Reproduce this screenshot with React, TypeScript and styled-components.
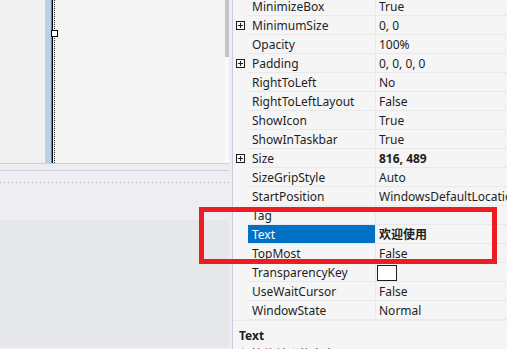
import React from "react";
import styled, {createGlobalStyle} from "styled-components";

const GlobalStyle = createGlobalStyle`
  html, body {
    margin: 0;
    padding: 0;
    background: #eeeef2;
  }
`

interface Prop {
    name: string;
    value?: string;
    expandable?: boolean;
    bold?: boolean;
    selected?: boolean;
    colorBox?: boolean;
}

const props: Prop[] = [
    {name: "MinimizeBox", value: "True"},
    {name: "MinimumSize", value: "0, 0", expandable: true},
    {name: "Opacity", value: "100%"},
    {name: "Padding", value: "0, 0, 0, 0", expandable: true},
    {name: "RightToLeft", value: "No"},
    {name: "RightToLeftLayout", value: "False"},
    {name: "ShowIcon", value: "True"},
    {name: "ShowInTaskbar", value: "True"},
    {name: "Size", value: "816, 489", expandable: true, bold: true},
    {name: "SizeGripStyle", value: "Auto"},
    {name: "StartPosition", value: "WindowsDefaultLocation"},
    {name: "Tag", value: ""},
    {name: "Text", value: "欢迎使用", bold: true, selected: true},
    {name: "TopMost", value: "False"},
    {name: "TransparencyKey", colorBox: true},
    {name: "UseWaitCursor", value: "False"},
    {name: "WindowState", value: "Normal"},
]

const PlusBox = () => (
    <svg width="9" height="9" viewBox="0 0 9 9">
        <rect x="0.5" y="0.5" width="8" height="8" fill="none" stroke="#1e1e1e"/>
        <path d="M2 4.5h5M4.5 2v5" stroke="#1e1e1e"/>
    </svg>
)

const App = () => {
    return (
        <Screen>
            <GlobalStyle/>
            <LeftPane>
                <Designer>
                    <Canvas>
                        <FormBody/>
                        <FormBorder/>
                        <SelectLine/>
                        <DotLine/>
                        <Handle/>
                    </Canvas>
                    <ScrollTrack>
                        <ScrollThumb/>
                    </ScrollTrack>
                </Designer>
                <TrayStrip>
                    <TrayLine/>
                    <Dots/>
                </TrayStrip>
                <ComponentTray/>
            </LeftPane>
            <RightPane>
                <Grid>
                    {props.map(p => (
                        <Row key={p.name}>
                            <Margin>{p.expandable && <PlusBox/>}</Margin>
                            <NameCell $selected={p.selected}>{p.name}</NameCell>
                            <ValueCell $bold={p.bold}>
                                {p.colorBox ? <ColorSwatch/> : p.value}
                            </ValueCell>
                        </Row>
                    ))}
                </Grid>
                <Description>
                    <DescTitle>Text</DescTitle>
                    <DescText>与控件关联的文本。</DescText>
                </Description>
            </RightPane>
            <Annotation/>
        </Screen>
    );
}

const Screen = styled.div`
  position: relative;
  width: 507px;
  height: 349px;
  overflow: hidden;
  display: flex;
  background: #eeeef2;
  font-family: "Noto Sans", "Noto Sans CJK SC", sans-serif;
  font-size: 12px;
  color: #1e1e1e;
`

const LeftPane = styled.div`
  width: 232px;
  flex-shrink: 0;
  display: flex;
  flex-direction: column;
  border-right: 1px solid #ccccdb;
`

const Designer = styled.div`
  width: 229px;
  height: 163px;
  display: flex;
  border-bottom: 1px solid #d0d0d8;
`

const Canvas = styled.div`
  position: relative;
  flex: 1;
  display: flex;
  background: #f5f5f5;
`

const FormBody = styled.div`
  width: 45px;
  background: #f0f0f0;
`

const FormBorder = styled.div`
  width: 6px;
  background: #b6d1ec;
  border-right: 1px solid #3d8fd6;
`

const SelectLine = styled.div`
  width: 1px;
  background: #000;
  margin-right: 1px;
`

const DotLine = styled.div`
  width: 0;
  border-left: 1px dotted #222;
`

const Handle = styled.div`
  position: absolute;
  left: 51px;
  top: 30px;
  width: 5px;
  height: 5px;
  background: #fff;
  border: 1px solid #000;
`

const ScrollTrack = styled.div`
  width: 4px;
  background: #fafafa;
`

const ScrollThumb = styled.div`
  height: 57px;
  background: #c2c3c9;
`

const TrayStrip = styled.div`
  width: 229px;
  height: 56px;
  padding-top: 6px;
  box-sizing: border-box;
`

const TrayLine = styled.div`
  height: 1px;
  background: #cfcfdd;
`

const Dots = styled.div`
  margin-top: 11px;
  height: 1px;
  background-image: linear-gradient(to right, #a8a8b0 1px, transparent 1px);
  background-size: 4px 1px;
`

const ComponentTray = styled.div`
  width: 229px;
  height: 127px;
  background: #e6e7e8;
`

const RightPane = styled.div`
  flex: 1;
  display: flex;
  flex-direction: column;
  background: #f5f5f5;
  min-width: 0;
`

const Grid = styled.div`
  margin-top: -3px;
  display: flex;
  flex-direction: column;
`

const Row = styled.div`
  display: flex;
  height: 19px;
`

const Margin = styled.div`
  width: 15px;
  flex-shrink: 0;
  display: flex;
  align-items: center;
  padding-left: 3px;
  box-sizing: border-box;
`

const NameCell = styled.div<{ $selected?: boolean }>`
  width: 128px;
  flex-shrink: 0;
  box-sizing: border-box;
  padding: 2px 0 0 4px;
  line-height: 16px;
  white-space: nowrap;
  overflow: hidden;
  border-bottom: 1px solid #e9e9e9;
  border-right: 1px solid #e9e9e9;
  background: ${p => p.$selected ? "#0072c6" : "transparent"};
  color: ${p => p.$selected ? "#fff" : "#1e1e1e"};
`

const ValueCell = styled.div<{ $bold?: boolean }>`
  flex: 1;
  box-sizing: border-box;
  padding: 2px 0 0 3px;
  line-height: 16px;
  white-space: nowrap;
  overflow: hidden;
  display: flex;
  align-items: center;
  border-bottom: 1px solid #e9e9e9;
  font-weight: ${p => p.$bold ? 700 : 400};
`

const ColorSwatch = styled.div`
  width: 18px;
  height: 14px;
  margin: -1px 0 0 -2px;
  background: #fff;
  border: 1px solid #1e1e1e;
`

const Description = styled.div`
  flex: 1;
  padding: 7px 0 0 6px;
  border-top: 1px solid #ebebeb;
`

const DescTitle = styled.div`
  font-weight: 700;
  line-height: 16px;
`

const DescText = styled.div`
  margin-top: 3px;
  line-height: 16px;
`

const Annotation = styled.div`
  position: absolute;
  left: 199px;
  top: 207px;
  width: 298px;
  height: 57px;
  box-sizing: border-box;
  border: 5px solid #ed1c24;
  pointer-events: none;
`

export default App;
